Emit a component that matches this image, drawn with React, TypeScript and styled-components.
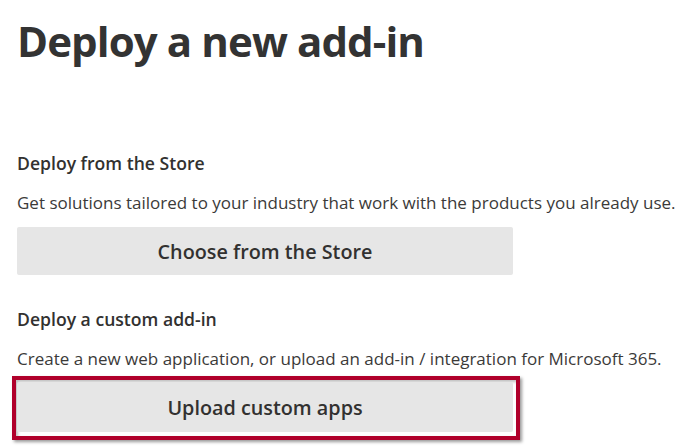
import styled, { createGlobalStyle } from "styled-components";

const GlobalStyle = createGlobalStyle`
  html, body {
    margin: 0;
    padding: 0;
    background: #ffffff;
  }
  body {
    font-family: "Open Sans", "Noto Sans", "Liberation Sans", sans-serif;
    color: #323130;
  }
`;

const Page = styled.main`
  width: 694px;
  height: 448px;
  padding: 16px 17px 0;
  box-sizing: border-box;
  overflow: hidden;
  display: flex;
  flex-direction: column;
`;

const Title = styled.h1`
  margin: 0 0 86px;
  font-size: 42px;
  line-height: 50px;
  font-weight: 700;
  color: #333333;
  letter-spacing: -0.9px;
`;

const Section = styled.section<{ $gap: number }>`
  display: flex;
  flex-direction: column;
  margin-bottom: ${(p) => p.$gap}px;
`;

const SectionTitle = styled.h2`
  margin: 0 0 18px;
  font-size: 17.6px;
  line-height: 22px;
  font-weight: 600;
  color: #323130;
`;

const Description = styled.p`
  margin: 0;
  font-size: 17px;
  line-height: 22px;
  font-weight: 400;
  color: #3b3a39;
  white-space: nowrap;
`;

const ActionButton = styled.button<{ $height: number }>`
  width: 496px;
  height: ${(p) => p.$height}px;
  border: none;
  border-radius: 2px;
  background: #e6e6e6;
  color: #323130;
  font-family: inherit;
  font-size: 19.8px;
  font-weight: 600;
  cursor: pointer;
  display: flex;
  align-items: center;
  justify-content: center;
`;

const Highlight = styled.div`
  align-self: flex-start;
  margin: 6px 0 0 -5px;
  padding: 2px 3px 4px 1px;
  border: 4px solid #b0002b;
  box-shadow: 2px 2px 3px rgba(0, 0, 0, 0.4),
    inset 2px 2px 3px rgba(0, 0, 0, 0.25);
`;

const ButtonSpacer = styled.div`
  height: 13px;
`;

export default function App() {
  return (
    <>
      <GlobalStyle />
      <Page>
        <Title>Deploy a new add-in</Title>
        <Section $gap={33}>
          <SectionTitle>Deploy from the Store</SectionTitle>
          <Description>
            Get solutions tailored to your industry that work with the products
            you already use.
          </Description>
          <ButtonSpacer />
          <ActionButton $height={48}>Choose from the Store</ActionButton>
        </Section>
        <Section $gap={0}>
          <SectionTitle>Deploy a custom add-in</SectionTitle>
          <Description>
            Create a new web application, or upload an add-in / integration for
            Microsoft 365.
          </Description>
          <Highlight>
            <ActionButton $height={50}>Upload custom apps</ActionButton>
          </Highlight>
        </Section>
      </Page>
    </>
  );
}
